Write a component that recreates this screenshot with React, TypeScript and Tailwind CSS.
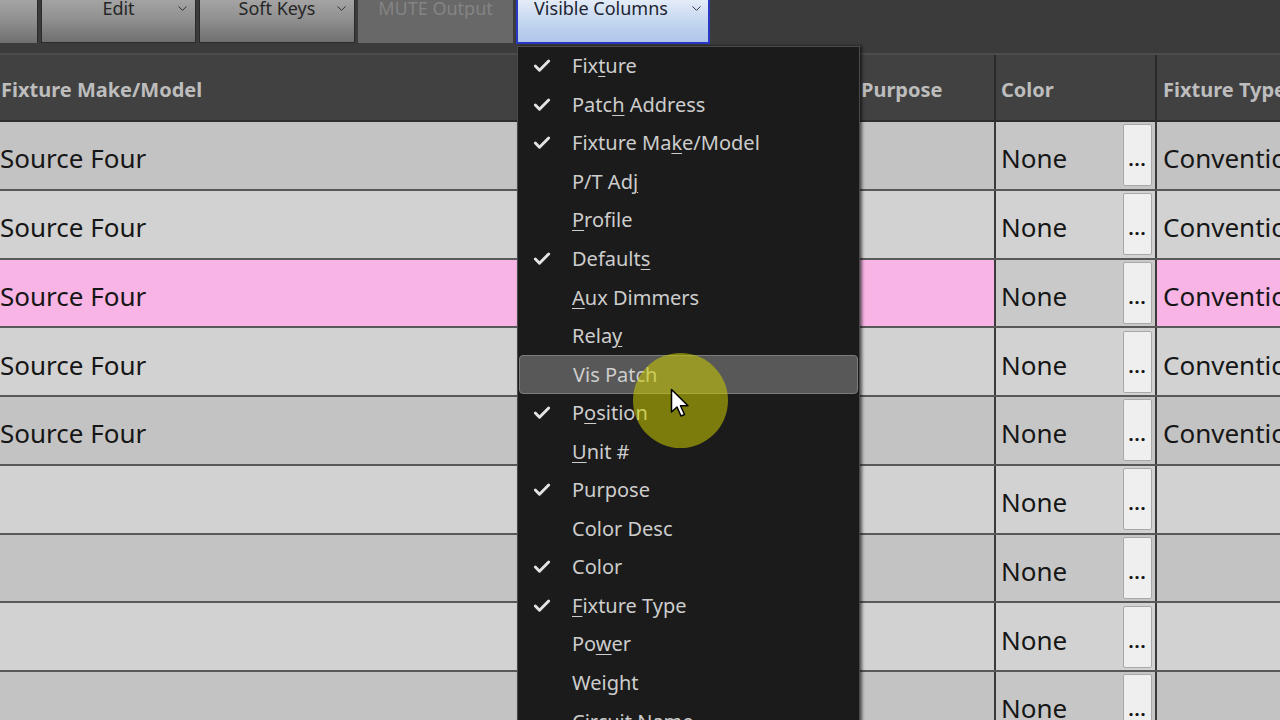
import { Check, ChevronDown } from "lucide-react";
import type { ReactNode } from "react";

type MenuItem = {
  label: ReactNode;
  checked?: boolean;
  active?: boolean;
};

const U = ({ children }: { children: ReactNode }) => (
  <span className="underline underline-offset-[3px] decoration-1">{children}</span>
);

const menuItems: MenuItem[] = [
  { label: <>Fix<U>t</U>ure</>, checked: true },
  { label: <>Patc<U>h</U> Address</>, checked: true },
  { label: <>Fixture Ma<U>k</U>e/Model</>, checked: true },
  { label: <>P/T Ad<U>j</U></> },
  { label: <><U>P</U>rofile</> },
  { label: <>Default<U>s</U></>, checked: true },
  { label: <><U>A</U>ux Dimmers</> },
  { label: <>Rela<U>y</U></> },
  { label: <>Vis Patch</>, active: true },
  { label: <>P<U>o</U>sition</>, checked: true },
  { label: <><U>U</U>nit #</> },
  { label: <>Purpose</>, checked: true },
  { label: <>Color Desc</> },
  { label: <>Color</>, checked: true },
  { label: <><U>F</U>ixture Type</>, checked: true },
  { label: <>Po<U>w</U>er</> },
  { label: <>Weight</> },
  { label: <>Circuit Name</> },
];

type Row = { model: string; type: string; pink?: boolean };

const rows: Row[] = [
  { model: "Source Four", type: "Conventional" },
  { model: "Source Four", type: "Conventional" },
  { model: "Source Four", type: "Conventional", pink: true },
  { model: "Source Four", type: "Conventional" },
  { model: "Source Four", type: "Conventional" },
  { model: "", type: "" },
  { model: "", type: "" },
  { model: "", type: "" },
  { model: "", type: "" },
];

function ToolButton({ label, width }: { label: string; width: string }) {
  return (
    <div
      className={`${width} h-[43px] relative flex justify-center bg-gradient-to-b from-[#a4a4a4] via-[#8e8e8e] to-[#6f6f6f] border border-[#2a2a2a] border-t-0`}
    >
      <span className="-mt-[5px] text-[18px] text-[#262626]">{label}</span>
      <ChevronDown className="absolute right-[5px] top-[1px] w-[15px] h-[15px] text-[#2a2a2a]" strokeWidth={1.5} />
    </div>
  );
}

export default function App() {
  return (
    <div
      className="relative w-[1280px] h-[720px] overflow-hidden bg-[#3b3b3b]"
      style={{ fontFamily: '"Noto Sans", "Open Sans", sans-serif' }}
    >
      {/* Toolbar */}
      <div className="flex h-[43px] gap-[3px] bg-[#3b3b3b]">
        <div className="w-[38px] h-[43px] bg-gradient-to-b from-[#a4a4a4] via-[#8e8e8e] to-[#6f6f6f] border-r border-[#2a2a2a]" />
        <ToolButton label="Edit" width="w-[155px]" />
        <ToolButton label="Soft Keys" width="w-[156px]" />
        <div className="w-[155px] h-[43px] flex justify-center bg-[#686868]">
          <span className="-mt-[5px] text-[18px] text-[#848484]">MUTE Output</span>
        </div>
        <div className="w-[194px] h-[44px] relative flex justify-center bg-gradient-to-b from-[#e4ecf8] via-[#c5d7f0] to-[#aec6ea] border-2 border-t-0 border-[#2a38c8]">
          <span className="-mt-[5px] -ml-[24px] text-[18px] text-[#1e2430]">Visible Columns</span>
          <ChevronDown className="absolute right-[4px] top-[1px] w-[15px] h-[15px] text-[#2a2a2a]" strokeWidth={1.5} />
        </div>
      </div>

      {/* Divider strip */}
      <div className="h-[12px] border-b-2 border-[#4c4c4c] bg-[#3b3b3b]" />

      {/* Table header */}
      <div className="flex h-[67px] bg-[#414141] border-b-2 border-[#2e2e2e] text-[20px] font-bold text-[#bdbdbd] whitespace-nowrap">
        <div className="w-[857px] flex items-center pl-[1px] pt-[4px]">Fixture Make/Model</div>
        <div className="w-[139px] flex items-center pl-[4px] pt-[4px] border-r-2 border-[#2a2a2a]">Purpose</div>
        <div className="w-[161px] flex items-center pl-[5px] pt-[4px] border-r-2 border-[#2a2a2a]">Color</div>
        <div className="flex-1 flex items-center pl-[6px] pt-[4px] overflow-hidden">Fixture Type</div>
      </div>

      {/* Table rows */}
      <div className="flex flex-col text-[26px] text-[#161616]">
        {rows.map((row, i) => {
          const base = row.pink ? "bg-[#f8b4e5]" : i % 2 === 0 ? "bg-[#c3c3c3]" : "bg-[#d2d2d2]";
          const colorCell = i % 2 === 0 ? "bg-[#c6c6c6]" : "bg-[#d2d2d2]";
          return (
            <div key={i} className="flex h-[68.75px] border-b-2 border-[#585858] shrink-0">
              <div className={`w-[857px] flex items-center pt-[7px] ${base}`}>{row.model}</div>
              <div className={`w-[139px] border-r-2 border-[#3a3a3a] ${base}`} />
              <div className={`w-[161px] flex items-center border-r-2 border-[#3a3a3a] ${row.pink ? "bg-[#c9c9c9]" : colorCell}`}>
                <span className="pl-[5px] pt-[7px] flex-1">None</span>
                <div className="w-[29px] h-[62px] mr-[3px] flex items-end justify-center pb-[17px] bg-[#efefef] border border-[#a8a8a8] rounded-[2px] text-[18px] leading-none font-bold tracking-[1px]">
                  ...
                </div>
              </div>
              <div className={`flex-1 flex items-center pl-[6px] pt-[7px] whitespace-nowrap overflow-hidden ${base}`}>{row.type}</div>
            </div>
          );
        })}
      </div>

      {/* Visible Columns dropdown */}
      <div className="absolute left-[517px] top-[46px] w-[343px] h-[700px] bg-[#1b1b1b] border border-[#4a4a4a] shadow-[2px_0_3px_rgba(0,0,0,0.6)] text-[20px] text-[#cdcdcd]">
        {menuItems.map((item, i) => (
          <div
            key={i}
            className={`h-[38.55px] flex items-center mx-[1px] ${
              item.active ? "bg-[#585858] border border-[#7c7c7c] rounded-[4px]" : ""
            }`}
          >
            <div className="w-[53px] flex justify-start pl-[13px]">
              {item.checked && <Check className="w-[20px] h-[20px] text-[#e4e4e4]" strokeWidth={3.5} />}
            </div>
            <span className="whitespace-nowrap">{item.label}</span>
          </div>
        ))}
      </div>

      {/* Pointer highlight */}
      <div className="absolute left-[633px] top-[353px] w-[95px] h-[95px] rounded-full bg-[#cccc00]/55" />
      <svg className="absolute left-[670px] top-[388px]" width="22" height="32" viewBox="0 0 22 32">
        <path d="M1.5 1.5 L1.5 24 L7 19 L11 28 L14.5 26.5 L10.5 17.8 L18 17.8 Z" fill="#ffffff" stroke="#000000" strokeWidth="1.5" strokeLinejoin="round" />
      </svg>
    </div>
  );
}
